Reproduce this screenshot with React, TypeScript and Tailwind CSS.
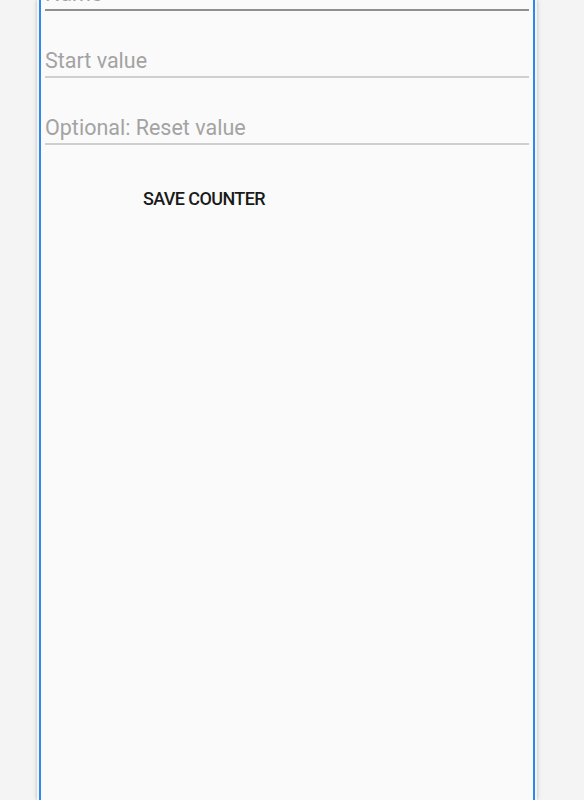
import React from 'react';

const fields = [
  { label: 'Name', active: true },
  { label: 'Start value', active: false },
  { label: 'Optional: Reset value', active: false },
];

export default function App() {
  return (
    <div className="h-[800px] w-[584px] overflow-hidden bg-[#f4f4f4]" style={{ fontFamily: 'Roboto, "Noto Sans", sans-serif' }}>
      <div className="ml-[37px] flex h-full w-[500px] px-[2px] shadow-[0_0_4px_rgba(0,0,0,0.25)]">
        <div className="flex h-full w-full flex-col border-x-2 border-[#2f88f0] bg-[#fafafa] px-[4px]">
          <div className="-mt-[56px] flex flex-col">
            {fields.map((f) => (
              <div
                key={f.label}
                className={
                  f.active
                    ? 'flex h-[67px] items-end border-b-2 border-[#8f8f8f] pb-[3px]'
                    : 'flex h-[67px] items-end border-b-2 border-[#cfcfcf] pb-[3px]'
                }
              >
                <span className="text-[21.5px] leading-[24px] text-[#a3a3a3]">{f.label}</span>
              </div>
            ))}
          </div>
          <div className="mt-[43px] w-[318px] text-center">
            <span className="text-[18px] font-medium leading-[22px] tracking-[-0.6px] text-[#1a1a1a]">SAVE COUNTER</span>
          </div>
        </div>
      </div>
    </div>
  );
}
